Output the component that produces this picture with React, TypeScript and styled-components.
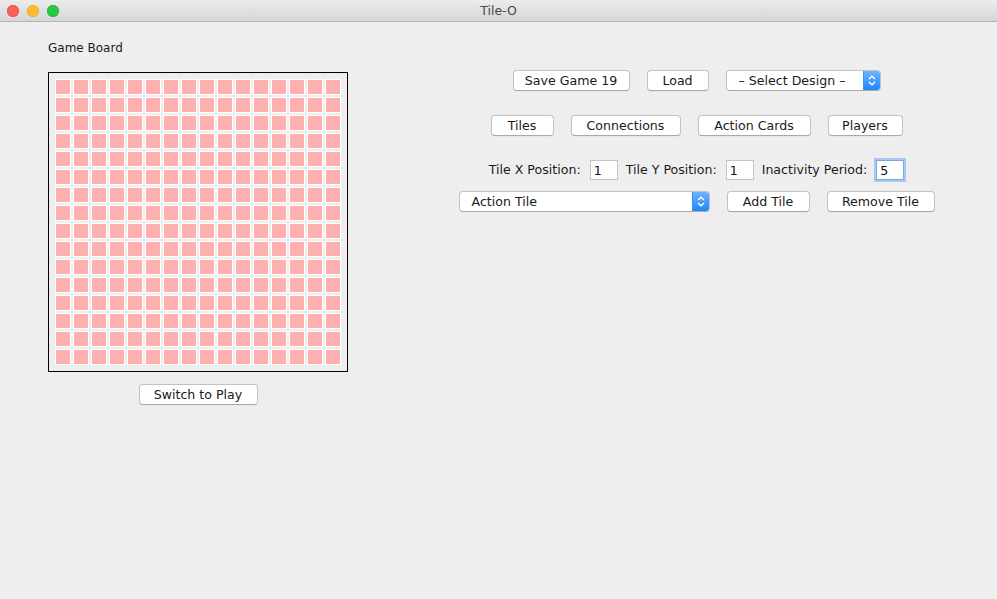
import React from "react"
import styled, { createGlobalStyle } from "styled-components"

const GlobalStyle = createGlobalStyle`
  html, body {
    margin: 0;
    padding: 0;
    background: #eeeeee;
  }
  body {
    font-family: "DejaVu Sans", "Liberation Sans", sans-serif;
    font-size: 12px;
    color: #1a1a1a;
  }
`

const Window = styled.div`
  width: 997px;
  height: 599px;
  display: flex;
  flex-direction: column;
  background: #eeeeee;
  overflow: hidden;
`

const TitleBar = styled.div`
  height: 21px;
  flex: none;
  position: relative;
  display: flex;
  align-items: center;
  justify-content: center;
  background: linear-gradient(#ececec, #d6d6d6);
  border-bottom: 1px solid #b4b4b4;
`

const Lights = styled.div`
  position: absolute;
  left: 7px;
  top: 5px;
  display: flex;
  gap: 8px;
`

const Light = styled.span<{ $color: string; $edge: string }>`
  width: 12px;
  height: 12px;
  border-radius: 50%;
  background: ${(p) => p.$color};
  box-shadow: inset 0 0 0 0.5px ${(p) => p.$edge};
`

const Title = styled.div`
  font-family: "DejaVu Sans", sans-serif;
  font-size: 12.5px;
  color: #4a4a4a;
`

const Content = styled.div`
  flex: 1;
  display: flex;
  padding-left: 48px;
`

const LeftColumn = styled.div`
  width: 300px;
  display: flex;
  flex-direction: column;
  align-items: center;
`

const BoardLabel = styled.div`
  align-self: flex-start;
  margin-top: 19px;
  height: 15px;
  line-height: 15px;
`

const Board = styled.div`
  margin-top: 16px;
  width: 300px;
  height: 300px;
  box-sizing: border-box;
  border: 1px solid #000;
  padding: 6px;
  display: grid;
  grid-template-columns: repeat(16, 16px);
  grid-auto-rows: 16px;
  gap: 2px;
`

const Tile = styled.div`
  box-sizing: border-box;
  border: 1px solid #ffffff;
  background: #ffafaf;
`

const RightColumn = styled.div`
  flex: 1;
  margin-left: 48px;
  display: flex;
  flex-direction: column;
  align-items: center;
  padding-top: 48px;
  font-size: 12.6px;
`

const Row = styled.div<{ $gap: number; $top: number }>`
  display: flex;
  align-items: center;
  gap: ${(p) => p.$gap}px;
  margin-top: ${(p) => p.$top}px;
`

const Button = styled.button<{ $width: number }>`
  width: ${(p) => p.$width}px;
  height: 21px;
  padding: 0;
  box-sizing: border-box;
  white-space: nowrap;
  background: #ffffff;
  border: 1px solid #c2c2c2;
  border-bottom-color: #a9a9a9;
  border-radius: 4px;
  box-shadow: 0 0.5px 0 rgba(0, 0, 0, 0.06);
  font-family: "DejaVu Sans", sans-serif;
  font-size: 12.6px;
  color: #1a1a1a;
  line-height: 19px;
  cursor: pointer;
`

const SwitchButton = styled(Button)`
  margin-top: 12px;
`

const SelectBox = styled.div<{ $width: number }>`
  width: ${(p) => p.$width}px;
  height: 21px;
  box-sizing: border-box;
  display: flex;
  align-items: stretch;
  background: #ffffff;
  border: 1px solid #c2c2c2;
  border-bottom-color: #a9a9a9;
  border-radius: 4px;
  overflow: hidden;
  white-space: nowrap;
`

const SelectText = styled.div`
  flex: 1;
  padding-left: 12px;
  line-height: 19px;
`

const SelectArrow = styled.div`
  width: 16px;
  display: flex;
  align-items: center;
  justify-content: center;
  background: linear-gradient(#6db4fb, #1f86fb);
  border-left: 1px solid #3d8ff0;
`

const FieldLabel = styled.span`
  line-height: 20px;
  white-space: nowrap;
`

const Field = styled.input<{ $focused?: boolean }>`
  width: 28px;
  height: 20px;
  box-sizing: border-box;
  padding: 0 3px;
  margin-left: 1px;
  border: 1px solid ${(p) => (p.$focused ? "#7aa7e6" : "#c4c4c4")};
  box-shadow: ${(p) => (p.$focused ? "0 0 0 2px #a9c9f4" : "none")};
  background: #ffffff;
  font-family: "DejaVu Sans", sans-serif;
  font-size: 12.6px;
  color: #111;
  outline: none;
`

const Arrows = () => (
  <svg width="8" height="11" viewBox="0 0 8 11">
    <path d="M1 4 L4 1.2 L7 4 M1 7 L4 9.8 L7 7" fill="none" stroke="#fff" strokeWidth="1.4" />
  </svg>
)

const tiles = Array.from({ length: 256 }, (_, i) => i)

export default function App() {
  return (
    <Window>
      <GlobalStyle />
      <TitleBar>
        <Lights>
          <Light $color="#fc5f57" $edge="#df4744" />
          <Light $color="#fdbc2e" $edge="#de9f34" />
          <Light $color="#28c840" $edge="#27aa35" />
        </Lights>
        <Title>Tile-O</Title>
      </TitleBar>
      <Content>
        <LeftColumn>
          <BoardLabel>Game Board</BoardLabel>
          <Board>
            {tiles.map((i) => (
              <Tile key={i} />
            ))}
          </Board>
          <SwitchButton $width={119}>Switch to Play</SwitchButton>
        </LeftColumn>
        <RightColumn>
          <Row $gap={17} $top={0}>
            <Button $width={117}>Save Game 19</Button>
            <Button $width={62}>Load</Button>
            <SelectBox $width={155}>
              <SelectText>– Select Design –</SelectText>
              <SelectArrow>
                <Arrows />
              </SelectArrow>
            </SelectBox>
          </Row>
          <Row $gap={17} $top={24}>
            <Button $width={63}>Tiles</Button>
            <Button $width={110}>Connections</Button>
            <Button $width={113}>Action Cards</Button>
            <Button $width={75}>Players</Button>
          </Row>
          <Row $gap={8} $top={24}>
            <FieldLabel>Tile X Position:</FieldLabel>
            <Field defaultValue="1" />
            <FieldLabel>Tile Y Position:</FieldLabel>
            <Field defaultValue="1" />
            <FieldLabel>Inactivity Period:</FieldLabel>
            <Field defaultValue="5" $focused />
          </Row>
          <Row $gap={17} $top={11}>
            <SelectBox $width={251}>
              <SelectText>Action Tile</SelectText>
              <SelectArrow>
                <Arrows />
              </SelectArrow>
            </SelectBox>
            <Button $width={83}>Add Tile</Button>
            <Button $width={108}>Remove Tile</Button>
          </Row>
        </RightColumn>
      </Content>
    </Window>
  )
}
